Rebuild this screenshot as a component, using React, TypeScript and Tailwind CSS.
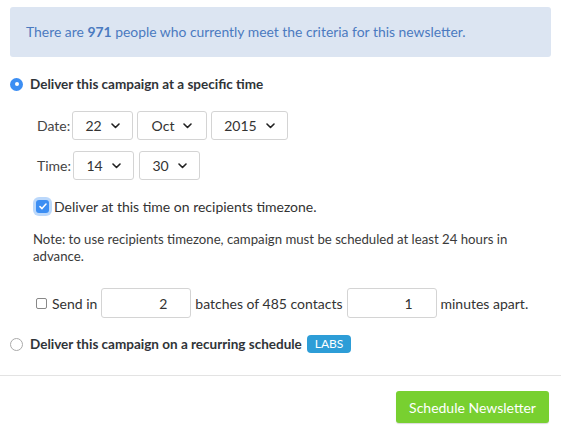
import React from "react";

const Chevron = () => (
  <svg width="9" height="6" viewBox="0 0 9 6" className="ml-[9px]" aria-hidden>
    <path d="M1 1l3.5 3.5L8 1" fill="none" stroke="#222" strokeWidth="1.6" strokeLinecap="round" strokeLinejoin="round" />
  </svg>
);

const Select = ({ value, w }: { value: string; w: string }) => (
  <div className={`flex items-center justify-center h-[29px] border border-[#d4d4d4] rounded-[3px] bg-white text-[#333] text-[14px] ${w}`}>
    <span>{value}</span>
    <Chevron />
  </div>
);

export default function App() {
  return (
    <div className="w-[561px] h-[432px] bg-white text-[14px] text-[#3a3a3a] overflow-hidden" style={{ fontFamily: '"Lato", "Liberation Sans", sans-serif' }}>
      <div className="px-[10px] pt-[7px]">
        <div className="h-[50px] bg-[#dce5f2] rounded-[3px] flex items-center pl-[16px] text-[#4b7ac0] text-[13.9px]">
          <span>
            There are <b className="font-bold">971</b> people who currently meet the criteria for this newsletter.
          </span>
        </div>

        <div className="mt-[20px] flex items-center h-[14px]">
          <span className="w-[13px] h-[13px] rounded-full bg-[#3c8ef3] flex items-center justify-center">
            <span className="w-[4px] h-[4px] rounded-full bg-white" />
          </span>
          <span className="ml-[7px] font-bold text-[13.5px] text-[#2f3438]">Deliver this campaign at a specific time</span>
        </div>

        <div className="pl-[27px] mt-[20px] flex flex-col gap-[11px]">
          <div className="flex items-center gap-[4px]">
            <span className="w-[31px] text-[#444]">Date:</span>
            <Select value="22" w="w-[61px]" />
            <Select value="Oct" w="w-[70px]" />
            <Select value="2015" w="w-[77px]" />
          </div>
          <div className="flex items-center gap-[5px]">
            <span className="w-[31px] text-[#444]">Time:</span>
            <Select value="14" w="w-[61px]" />
            <Select value="30" w="w-[61px]" />
          </div>
        </div>

        <div className="pl-[26px] mt-[17px] flex items-center h-[18px]">
          <span className="w-[13px] h-[13px] rounded-[3px] bg-[#3c8ef3] flex items-center justify-center shadow-[0_0_0_3px_rgba(60,142,243,0.35)]">
            <svg width="8" height="7" viewBox="0 0 8 7" aria-hidden>
              <path d="M1 3.6l2 2L7 1" fill="none" stroke="white" strokeWidth="1.5" strokeLinecap="round" strokeLinejoin="round" />
            </svg>
          </span>
          <span className="ml-[5px] text-[#333]">Deliver at this time on recipients timezone.</span>
        </div>

        <div className="pl-[23px] pr-[30px] mt-[16px] text-[13.2px] leading-[17px] text-[#3a3a3a]">
          Note: to use recipients timezone, campaign must be scheduled at least 24 hours in advance.
        </div>

        <div className="pl-[26px] mt-[23px] flex items-center">
          <span className="w-[11px] h-[11px] border border-[#888] rounded-[2px] bg-white" />
          <span className="ml-[5px] text-[#333]">Send in</span>
          <div className="ml-[4px] w-[90px] h-[30px] border border-[#d4d4d4] rounded-[3px] flex items-center justify-end pr-[23px] text-[#333]">2</div>
          <span className="ml-[4px] text-[#333]">batches of 485 contacts</span>
          <div className="ml-[4px] w-[90px] h-[30px] border border-[#d4d4d4] rounded-[3px] flex items-center justify-end pr-[23px] text-[#333]">1</div>
          <span className="ml-[4px] text-[#333]">minutes apart.</span>
        </div>

        <div className="mt-[17px] flex items-center h-[18px]">
          <span className="w-[13px] h-[13px] rounded-full border border-[#aaa] bg-white" />
          <span className="ml-[7px] font-bold text-[13.5px] text-[#2f3438]">Deliver this campaign on a recurring schedule</span>
          <span className="ml-[5px] h-[18px] px-[8px] rounded-[4px] bg-[#2d9dd7] text-white text-[12px] flex items-center">LABS</span>
        </div>
      </div>

      <div className="mt-[22px] border-t border-[#e3e3e3]" />

      <div className="flex justify-end pr-[12px] mt-[15px]">
        <button className="w-[153px] h-[32px] rounded-[3px] bg-[#78d030] text-white text-[14px] shadow-[0_1px_1px_rgba(0,0,0,0.15)]">
          Schedule Newsletter
        </button>
      </div>
    </div>
  );
}
